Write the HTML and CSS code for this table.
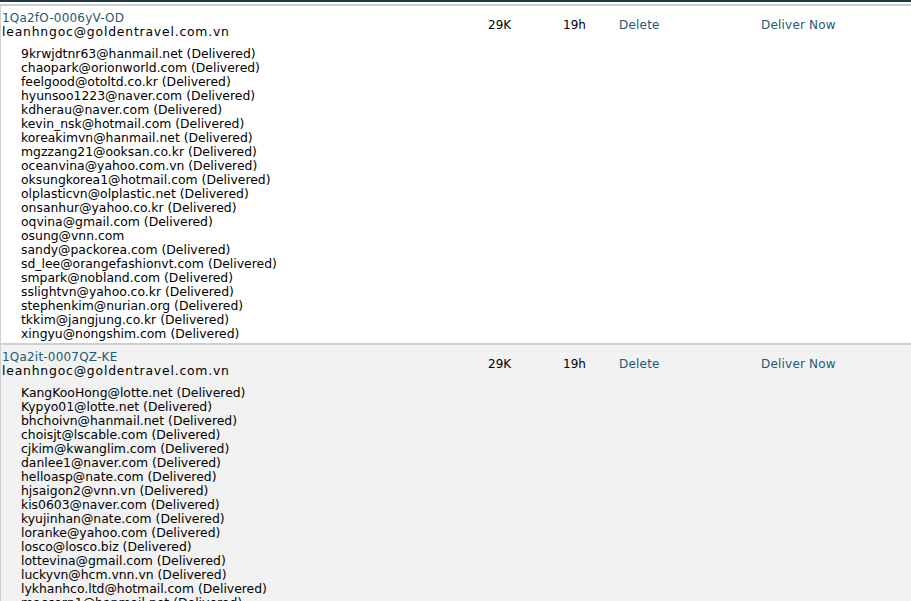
FILE: index.html
```html
<!DOCTYPE html>
<html>
<head>
<meta charset="utf-8">
<link rel="stylesheet" href="styles.css">
</head>
<body>
<div class="topbar"></div>
<div class="queue">
  <div class="msg">
    <div class="main">
      <a class="id">1Qa2fO-0006yV-OD</a>
      <div class="from">leanhngoc@goldentravel.com.vn</div>
      <ul class="rcpts">
        <li>9krwjdtnr63@hanmail.net (Delivered)</li>
        <li>chaopark@orionworld.com (Delivered)</li>
        <li>feelgood@otoltd.co.kr (Delivered)</li>
        <li>hyunsoo1223@naver.com (Delivered)</li>
        <li>kdherau@naver.com (Delivered)</li>
        <li>kevin_nsk@hotmail.com (Delivered)</li>
        <li>koreakimvn@hanmail.net (Delivered)</li>
        <li>mgzzang21@ooksan.co.kr (Delivered)</li>
        <li>oceanvina@yahoo.com.vn (Delivered)</li>
        <li>oksungkorea1@hotmail.com (Delivered)</li>
        <li>olplasticvn@olplastic.net (Delivered)</li>
        <li>onsanhur@yahoo.co.kr (Delivered)</li>
        <li>oqvina@gmail.com (Delivered)</li>
        <li>osung@vnn.com</li>
        <li>sandy@packorea.com (Delivered)</li>
        <li>sd_lee@orangefashionvt.com (Delivered)</li>
        <li>smpark@nobland.com (Delivered)</li>
        <li>sslightvn@yahoo.co.kr (Delivered)</li>
        <li>stephenkim@nurian.org (Delivered)</li>
        <li>tkkim@jangjung.co.kr (Delivered)</li>
        <li>xingyu@nongshim.com (Delivered)</li>
      </ul>
    </div>
    <div class="size">29K</div>
    <div class="age">19h</div>
    <a class="act del">Delete</a>
    <a class="act now">Deliver Now</a>
  </div>
  <div class="msg alt">
    <div class="main">
      <a class="id">1Qa2it-0007QZ-KE</a>
      <div class="from">leanhngoc@goldentravel.com.vn</div>
      <ul class="rcpts">
        <li>KangKooHong@lotte.net (Delivered)</li>
        <li>Kypyo01@lotte.net (Delivered)</li>
        <li>bhchoivn@hanmail.net (Delivered)</li>
        <li>choisjt@lscable.com (Delivered)</li>
        <li>cjkim@kwanglim.com (Delivered)</li>
        <li>danlee1@naver.com (Delivered)</li>
        <li>helloasp@nate.com (Delivered)</li>
        <li>hjsaigon2@vnn.vn (Delivered)</li>
        <li>kis0603@naver.com (Delivered)</li>
        <li>kyujinhan@nate.com (Delivered)</li>
        <li>loranke@yahoo.com (Delivered)</li>
        <li>losco@losco.biz (Delivered)</li>
        <li>lottevina@gmail.com (Delivered)</li>
        <li>luckyvn@hcm.vnn.vn (Delivered)</li>
        <li>lykhanhco.ltd@hotmail.com (Delivered)</li>
        <li>maccorp1@hanmail.net (Delivered)</li>
      </ul>
    </div>
    <div class="size">29K</div>
    <div class="age">19h</div>
    <a class="act del">Delete</a>
    <a class="act now">Deliver Now</a>
  </div>
</div>
</body>
</html>
```
FILE: styles.css
```css
html, body {
  margin: 0;
  padding: 0;
  background: #fff;
  overflow: hidden;
}
body {
  font-family: "DejaVu Sans", Verdana, sans-serif;
  font-size: 12px;
  line-height: 14px;
  color: #000;
}
.topbar {
  height: 2px;
  background: #1d3c44;
  border-bottom: 2px solid #fff;
}
.msg {
  display: grid;
  grid-template-columns: 486px 75px 56px 142px 1fr;
  border-top: 2px solid #cfcfcf;
  border-left: 1px solid #d0d0d0;
  padding: 5px 0 2px 1px;
}
.msg.alt {
  background: #f2f2f2;
}
.id, .act {
  color: #235a74;
  text-decoration: none;
  display: block;
}
.id {
  letter-spacing: 0.2px;
}
.from {
  font-size: 12.4px;
  letter-spacing: 0.8px;
}
.rcpts {
  list-style: none;
  margin: 8px 0 0 0;
  padding: 0 0 0 19px;
  font-size: 12.4px;
}
.act {
  letter-spacing: 0.2px;
}
.size, .age, .act {
  padding-top: 7px;
}
```
